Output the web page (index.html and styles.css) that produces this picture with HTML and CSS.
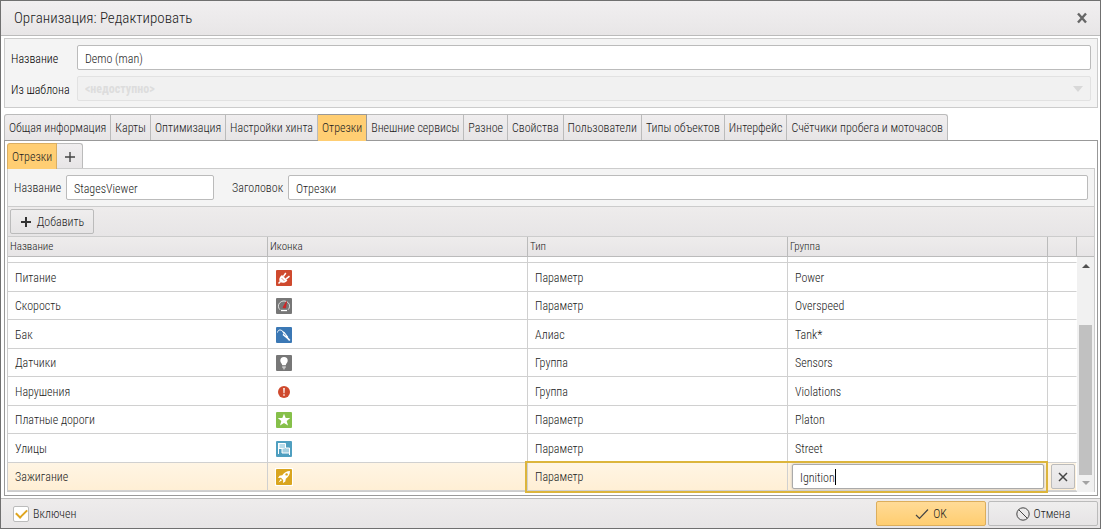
FILE: index.html
```html
<!DOCTYPE html>
<html lang="ru">
<head>
<meta charset="utf-8">
<title>Организация: Редактировать</title>
<link rel="stylesheet" href="styles.css">
</head>
<body>
<div class="dialog">
  <header class="titlebar">
    <h1 class="title">Организация: Редактировать</h1>
    <button class="close" type="button" aria-label="Закрыть"><svg width="12" height="12" viewBox="0 0 12 12"><path d="M2 1.5L10 10.5M10 1.5L2 10.5" stroke="#666" stroke-width="2.4" fill="none"/></svg></button>
  </header>

  <section class="summary">
    <label class="summary-label" for="org-name">Название</label>
    <input class="field" id="org-name" type="text" value="Demo (man)">
    <label class="summary-label" for="org-template">Из шаблона</label>
    <div class="select-wrap">
      <select class="field select" id="org-template" disabled><option>&lt;недоступно&gt;</option></select>
      <span class="select-arrow"></span>
    </div>
  </section>

  <nav class="tabs main-tabs">
    <button class="tab" type="button">Общая информация</button>
    <button class="tab" type="button">Карты</button>
    <button class="tab" type="button">Оптимизация</button>
    <button class="tab" type="button">Настройки хинта</button>
    <button class="tab active" type="button">Отрезки</button>
    <button class="tab" type="button">Внешние сервисы</button>
    <button class="tab" type="button">Разное</button>
    <button class="tab" type="button">Свойства</button>
    <button class="tab" type="button">Пользователи</button>
    <button class="tab" type="button">Типы объектов</button>
    <button class="tab" type="button">Интерфейс</button>
    <button class="tab" type="button">Счётчики пробега и моточасов</button>
  </nav>

  <main class="tab-page">
    <nav class="tabs sub-tabs">
      <button class="tab active" type="button">Отрезки</button>
      <button class="tab tab-add" type="button" aria-label="Добавить вкладку"><svg width="12" height="12" viewBox="0 0 12 12"><path d="M6 1V11M1 6H11" stroke="#444" stroke-width="1.4"/></svg></button>
    </nav>
    <div class="editor">
      <div class="editor-form">
        <label class="form-label" for="view-name">Название</label>
        <input class="field name-field" id="view-name" type="text" value="StagesViewer">
        <label class="form-label caption-label" for="view-caption">Заголовок</label>
        <input class="field caption-field" id="view-caption" type="text" value="Отрезки">
      </div>
      <div class="toolbar">
        <button class="btn add" type="button"><svg width="12" height="12" viewBox="0 0 12 12"><path d="M6 1V11M1 6H11" stroke="#333" stroke-width="2"/></svg>Добавить</button>
      </div>
      <div class="grid">
        <table class="rows">
          <colgroup><col><col><col><col><col class="col-action"></colgroup>
          <thead><tr><th>Название</th><th>Иконка</th><th>Тип</th><th>Группа</th><th></th></tr></thead>
          <tbody>
            <tr class="clipped"><td></td><td></td><td></td><td></td><td></td></tr>
            <tr><td>Питание</td><td><svg class="ico" viewBox="0 0 16 16"><rect width="16" height="16" rx="1" fill="#cf4a2e"/><path d="M2.500 13.500L4.500 11.500" stroke="#fff" stroke-width="1.600"/><path d="M6 5L11.400 10.400C9.600 13 6 13.600 4.200 11.800C2.400 10 3.600 6.600 6 5Z" fill="#fff"/><path d="M7.300 6.700L9.800 3M9.800 9.200L13.500 6.200" stroke="#fff" stroke-width="1.500"/><path d="M5.500 8L8.500 11" stroke="#cf4a2e" stroke-width=".6"/></svg></td><td>Параметр</td><td>Power</td><td></td></tr>
            <tr><td>Скорость</td><td><svg class="ico" viewBox="0 0 16 16"><rect width="16" height="16" rx="1" fill="#777"/><path d="M4 11.800A5.600 5.200 0 1 1 12 11.800" fill="none" stroke="#ddd" stroke-width="1"/><path d="M7 9.500L10.500 3.500L9.500 10Z" fill="#d22" stroke="#c22" stroke-width=".8"/><path d="M5 12.500H11" stroke="#fff" stroke-width="1.300"/></svg></td><td>Параметр</td><td>Overspeed</td><td></td></tr>
            <tr><td>Бак</td><td><svg class="ico" viewBox="0 0 16 16"><rect width="16" height="16" rx="1" fill="#3b78b5"/><path d="M1.500 5.500C2 2.500 4.500 2.500 6.500 4" fill="none" stroke="#fff" stroke-width="1"/><path d="M5.500 3.600L8.500 5L12.300 10L10.500 11.300L6.500 8L7.500 6.500Z" fill="#fff"/><path d="M10.500 10L13.800 13.500" stroke="#fff" stroke-width="1.800"/><path d="M8 6.600L9.500 8.500" stroke="#3b78b5" stroke-width=".8"/></svg></td><td>Алиас</td><td>Tank*</td><td></td></tr>
            <tr><td>Датчики</td><td><svg class="ico" viewBox="0 0 16 16"><rect width="16" height="16" rx="1" fill="#777"/><path d="M8 2A3.700 3.700 0 0 0 4.300 5.700C4.300 7.500 6 8.300 6.200 10H9.800C10 8.300 11.700 7.500 11.700 5.700A3.700 3.700 0 0 0 8 2Z" fill="#fff"/><path d="M6.200 11.200H9.800M6.300 12.600H9.700M7 13.800H9" stroke="#ddd" stroke-width=".9"/></svg></td><td>Группа</td><td>Sensors</td><td></td></tr>
            <tr><td>Нарушения</td><td><svg class="ico" viewBox="0 0 16 16"><circle cx="8" cy="8" r="6" fill="#cf4a2e"/><path d="M7.100 4H8.900L8.600 9.200H7.400ZM7.200 10.200H8.800V11.800H7.200Z" fill="#fbe9e4"/></svg></td><td>Группа</td><td>Violations</td><td></td></tr>
            <tr><td>Платные дороги</td><td><svg class="ico" viewBox="0 0 16 16"><rect width="16" height="16" rx="1" fill="#86c04a"/><path d="M8 1.800L9.700 6H14.200L10.700 8.900L12 13.600L8 11L4 13.600L5.300 8.900L1.800 6H6.300Z" fill="#fff"/></svg></td><td>Параметр</td><td>Platon</td><td></td></tr>
            <tr><td>Улицы</td><td><svg class="ico" viewBox="0 0 16 16"><rect width="16" height="16" rx="1" fill="#4f9fc0"/><path d="M2.500 2V13" stroke="#fff"/><path d="M3 2.500H9.500V7.500H3Z" fill="#b9dcea" stroke="#fff"/><path d="M6 8V12H13.500V7H10" fill="#a6d0e1" stroke="#fff"/><path d="M13.500 7V14" stroke="#fff"/></svg></td><td>Параметр</td><td>Street</td><td></td></tr>
            <tr class="selected"><td>Зажигание</td><td><svg class="ico framed" viewBox="0 0 16 16"><rect width="16" height="16" rx="1" fill="#d9a51f"/><path d="M14 2C10.500 2 8 3.700 6.300 6.200L3.500 6.700L2 9L5 8.800L7.200 11L7 14L9.300 12.500L9.800 9.700C12.300 8 14 5.500 14 2Z" fill="#fff"/><circle cx="10.600" cy="5.400" r="1.200" fill="#d9a51f"/><path d="M4.700 10L2.500 13.500L6 11.300" fill="#fff"/></svg></td><td class="focus-start">Параметр</td><td class="cell-edit"><input class="cell-input" type="text" value="Ignition" aria-label="Группа"><span class="caret"></span></td><td class="cell-action"><button class="btn remove" type="button" aria-label="Удалить"><svg width="12" height="12" viewBox="0 0 12 12"><path d="M2 2L10 10M10 2L2 10" stroke="#444" stroke-width="1.500"/></svg></button></td></tr>
          </tbody>
        </table>
        <div class="side">
          <div class="side-head"></div>
          <div class="scrollbar">
            <span class="arrow up"></span>
            <span class="thumb"></span>
            <span class="arrow down"></span>
          </div>
        </div>
      </div>
    </div>
  </main>

  <footer class="footer">
    <label class="enabled"><input class="check" type="checkbox" checked>Включен</label>
    <button class="btn wide ok" type="button"><svg width="14" height="12" viewBox="0 0 14 12"><path d="M1 7L4.500 10.500L13 1.500" fill="none" stroke="#444" stroke-width="1.200"/></svg>OK</button>
    <button class="btn wide" type="button"><svg width="14" height="14" viewBox="0 0 14 14"><circle cx="7" cy="7" r="6.200" fill="none" stroke="#444"/><path d="M2.600 2.600L11.400 11.400" stroke="#444"/></svg>Отмена</button>
  </footer>
</div>
</body>
</html>
```
FILE: styles.css
```css
* { box-sizing: border-box; }

body {
  margin: 0;
  background: #fff;
  color: #222;
  font: 350 12px/16px "Roboto Condensed", "Liberation Sans Narrow", Roboto, sans-serif;
}

button, input, select { font: inherit; color: inherit; }
button { padding: 0; }

.dialog {
  display: flex;
  flex-direction: column;
  min-height: 100vh;
  border: 1px solid #707070;
}

.titlebar {
  display: flex;
  align-items: center;
  justify-content: space-between;
  height: 35px;
  padding: 0 12px 0 13px;
  border-bottom: 1px solid #bbb;
  background: linear-gradient(#f1eff0, #e8e6e7);
}
.title { margin: 0; font-size: 15px; line-height: 20px; font-weight: 300; }
.close { display: flex; border: 0; background: none; }

.summary {
  display: grid;
  grid-template-columns: 66px 1fr;
  row-gap: 6px;
  align-items: center;
  margin: 2px 2px 0 3px;
  padding: 6px;
  border: 1px solid #ccc;
  background: #f4f4f4;
}
.summary-label { padding-top: 2px; color: #000; }

.field {
  width: 100%;
  height: 25px;
  padding: 2px 7px 0;
  border: 1px solid #bbb;
  border-radius: 2px;
  background: #fff;
  outline: 0;
}
.select-wrap { position: relative; display: flex; }
.select {
  appearance: none;
  padding-top: 0;
  border-color: #e2e2e2;
  background: #f1f1f1;
  color: #ddd;
  font-weight: 700;
  opacity: 1;
}
.select-arrow {
  position: absolute;
  top: 10px;
  right: 8px;
  border: 5px solid transparent;
  border-top: 6px solid #d8d8d8;
  border-bottom: 0;
}

.tabs { display: flex; }
.main-tabs { margin: 6px 3px 0; }
.sub-tabs { margin-bottom: -1px; }
.tab {
  height: 26px;
  padding: 0 4px;
  border: 1px solid #bbb;
  border-width: 1px 1px 0 0;
  background: linear-gradient(#f0eeef, #e7e5e6);
  white-space: nowrap;
}
.tab:first-child { border-left-width: 1px; border-top-left-radius: 3px; }
.tab:last-child { border-top-right-radius: 3px; }
.tab.active { position: relative; border-color: #d9ae63; background: #ffce73; }
.main-tabs .active { height: 27px; margin-bottom: -1px; border-color: #999; }
.tab-add { display: flex; align-items: center; justify-content: center; width: 26px; }

.tab-page {
  display: flex;
  flex: 1;
  flex-direction: column;
  margin: 0 2px 2px 3px;
  padding: 2px 2px 3px;
  border: 1px solid #999;
}
.editor { border: 1px solid #ccc; border-bottom: 0; }
.editor-form {
  display: flex;
  align-items: center;
  padding: 6px;
  background: #f4f4f4;
}
.form-label { width: 52px; }
.name-field { width: 148px; }
.caption-label { width: 56px; margin-left: 18px; }
.caption-field { flex: 1; }

.toolbar {
  display: flex;
  padding: 2px;
  border: 1px solid #ccc;
  border-width: 1px 0;
  background: linear-gradient(#eeecec, #e7e5e6);
}
.btn {
  display: flex;
  align-items: center;
  justify-content: center;
  gap: 4px;
  height: 25px;
  border: 1px solid #bbb;
  border-radius: 2px;
  background: linear-gradient(#efeeee, #e6e4e5);
}
.add { width: 84px; gap: 5px; }

.grid { display: flex; }
.rows {
  width: calc(100% - 17px);
  table-layout: fixed;
  border-collapse: separate;
  border-spacing: 0;
  border-bottom: 1px solid #ccc;
}
.col-action { width: 29px; }
.rows th {
  height: 20px;
  padding: 0 2px;
  border: 1px solid #bbb;
  border-width: 0 1px 1px 0;
  background: linear-gradient(#eeecec, #e7e5e6);
  font-size: 11px;
  font-weight: 350;
  text-align: left;
}
.rows td {
  height: 29px;
  padding: 2px 7px 0;
  border: 1px solid #d0d0d0;
  border-width: 0 1px 1px 0;
}
.rows tbody tr:nth-child(odd) td { height: 28px; padding-top: 1px; }
.rows tbody .clipped:first-child td { height: 6px; padding: 0; }
.rows td:last-child { border-right-color: #fff; }
.ico { display: block; width: 16px; height: 16px; margin-left: 1px; }
.framed { outline: 1px solid #fff; }

.selected td { background: linear-gradient(#fff5e4, #ffefd5); }
.rows .focus-start { position: relative; }
.focus-start::after {
  content: "";
  position: absolute;
  z-index: 1;
  inset: -2px calc(-100% - 2px) -3px -3px;
  border: 2px solid #dcb53c;
  pointer-events: none;
}
.rows .cell-edit { position: relative; padding: 1px 3px 1px 4px; }
.cell-input {
  display: block;
  width: 100%;
  height: 25px;
  padding: 2px 7px 0;
  border: 1px solid #aaa;
  border-radius: 2px;
  outline: 0;
  box-shadow: 0 0 3px #bbb;
}
.caret { position: absolute; left: 47px; top: 6px; width: 1px; height: 16px; background: #000; }
.rows .cell-action { padding: 1px 1px 1px 3px; border-right-color: #ffefd5; }
.remove { width: 24px; }

.side { display: flex; flex-direction: column; width: 17px; }
.side-head {
  height: 20px;
  border-bottom: 1px solid #bbb;
  background: linear-gradient(#eeecec, #e7e5e6);
}
.scrollbar {
  display: flex;
  flex: 1;
  flex-direction: column;
  align-items: center;
  padding: 7px 0;
  background: #f1f1f1;
}
.arrow { border: 4px solid transparent; }
.up { border-top: 0; border-bottom-color: #505050; }
.down { border-bottom: 0; border-top-color: #a3a3a3; }
.thumb { width: 13px; height: 150px; margin: auto 0 6px; background: #c1c1c1; }

.footer {
  display: flex;
  align-items: center;
  gap: 2px;
  padding: 2px 2px 2px 12px;
  border-top: 1px solid #bbb;
  background: linear-gradient(#eeecec, #e7e5e6);
}
.enabled { display: flex; align-items: center; gap: 4px; margin-right: auto; color: #222; }
.check {
  appearance: none;
  display: grid;
  place-items: center;
  width: 16px;
  height: 16px;
  margin: 0;
  border: 1px solid #bbb;
  border-radius: 2px;
  background: #fff;
}
.check:checked::after {
  content: "";
  width: 9px;
  height: 5px;
  margin-bottom: 3px;
  border: solid #dfa51f;
  border-width: 0 0 2px 2px;
  transform: rotate(-45deg);
}
.wide { width: 110px; }
.ok { border-color: #dcae5c; background: linear-gradient(#ffdb97, #ffcd70); }
```
